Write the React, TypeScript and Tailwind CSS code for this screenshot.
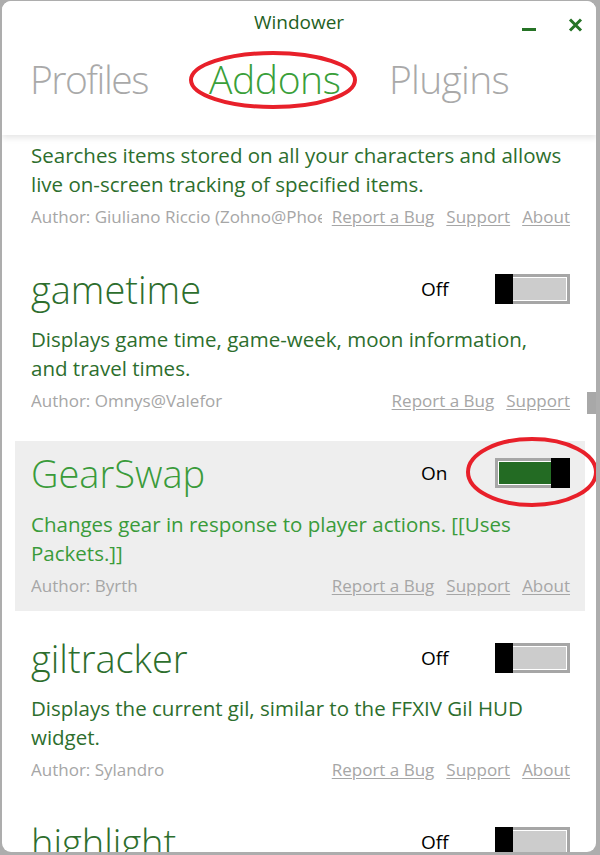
import React from 'react'

interface Addon {
  name: string
  desc: string[]
  author: string
  enabled: boolean
  about: boolean
}

const addons: Addon[] = [
  {
    name: 'findAll',
    desc: ['Searches items stored on all your characters and allows', 'live on-screen tracking of specified items.'],
    author: 'Author: Giuliano Riccio (Zohno@Phoenix)',
    enabled: false,
    about: true,
  },
  {
    name: 'gametime',
    desc: ['Displays game time, game-week, moon information,', 'and travel times.'],
    author: 'Author: Omnys@Valefor',
    enabled: false,
    about: false,
  },
  {
    name: 'GearSwap',
    desc: ['Changes gear in response to player actions. [[Uses', 'Packets.]]'],
    author: 'Author: Byrth',
    enabled: true,
    about: true,
  },
  {
    name: 'giltracker',
    desc: ['Displays the current gil, similar to the FFXIV Gil HUD', 'widget.'],
    author: 'Author: Sylandro',
    enabled: false,
    about: true,
  },
  {
    name: 'highlight',
    desc: ['Highlights party members in chat.', ''],
    author: 'Author: Balloon',
    enabled: false,
    about: true,
  },
]

const font = "[font-family:'Open_Sans','Noto_Sans',sans-serif]"

// Square switch: grey frame, black knob
const Toggle = ({ on }: { on: boolean }) => (
  <div className="relative h-[30px] w-[75px] bg-[#a6a6a6] p-[3px]">
    <div className={`h-full w-full border border-white ${on ? 'bg-[#236b23]' : 'bg-[#cccccc]'}`} />
    <div className={`absolute top-0 h-[30px] bg-black ${on ? 'right-0 w-[19px]' : 'left-0 w-[18px]'}`} />
  </div>
)

const AddonRow = ({ addon }: { addon: Addon }) => {
  const on = addon.enabled
  return (
    <div className={`h-[170px] pl-[16px] pr-[15px] ${on ? 'bg-[#eeeeee]' : 'bg-white'}`}>
      {/* Title + switch */}
      <div className="mt-[10px] flex h-[44px] items-center">
        <span className={`text-[38px] font-light leading-[44px] ${on ? 'text-[#3a9b3a]' : 'text-[#2d6e2d]'}`}>
          {addon.name}
        </span>
        <span className="ml-auto w-[74px] text-[19px] leading-[24px] text-black">{on ? 'On' : 'Off'}</span>
        <Toggle on={on} />
      </div>

      {/* Description */}
      <div className={`mt-[14.5px] text-[20.5px] leading-[29px] ${on ? 'text-[#3a9b3a]' : 'text-[#2d6e2d]'}`}>
        {addon.desc.map((line, i) => (
          <div key={i} className="h-[29px] whitespace-nowrap">
            {line}
          </div>
        ))}
      </div>

      {/* Author + links */}
      <div className="mt-[6px] flex h-[23px] items-center text-[17px] leading-[23px] text-[#a6a6a6]">
        <span className="flex-1 overflow-hidden whitespace-nowrap">{addon.author}</span>
        <span className="ml-[10px] whitespace-nowrap underline underline-offset-2">Report a Bug</span>
        <span className="ml-[12px] whitespace-nowrap underline underline-offset-2">Support</span>
        {addon.about && <span className="ml-[12px] whitespace-nowrap underline underline-offset-2">About</span>}
      </div>
    </div>
  )
}

export default function App() {
  return (
    <div className={`h-[855px] w-[600px] bg-[#adadad] pb-[3px] pl-[2px] pr-[4px] pt-[1px] ${font}`}>
      <div className="relative flex h-full flex-col overflow-hidden rounded-[9px] bg-white">
        {/* Header */}
        <div className="relative z-10 h-[134px] shrink-0 bg-white shadow-[0_3px_6px_rgba(0,0,0,0.10)]">
          <div className="flex h-[42px] items-center justify-center pt-[1px] text-[19px] text-[#1f5f1f]">Windower</div>
          <div className="absolute right-[60px] top-[27px] h-[3px] w-[14px] bg-[#267326]" />
          <svg className="absolute right-[13px] top-[17px]" width="15" height="14" viewBox="0 0 15 14">
            <path d="M2 1.5 L13 12.5 M13 1.5 L2 12.5" stroke="#267326" strokeWidth="3" />
          </svg>

          <div className="mt-[12px] flex pl-[28px] text-[39px] font-light leading-[48px]">
            <div className="w-[179px] tracking-[-1.5px] text-[#a9a9a9]">Profiles</div>
            <div className="w-[180px] tracking-[-0.4px] text-[#3a9f3a]">Addons</div>
            <div className="tracking-[-0.7px] text-[#a9a9a9]">Plugins</div>
          </div>
        </div>

        {/* Scrolled list */}
        <div className="relative flex-1 overflow-hidden">
          <div className="-mt-[63px] flex flex-col gap-[14.5px] pl-[13px] pr-[11px]">
            {addons.map((a) => (
              <AddonRow key={a.name} addon={a} />
            ))}
          </div>
          <div className="absolute right-0 top-[257px] h-[22px] w-[9px] bg-[#a8a8a8]" />
        </div>

        {/* Red annotation ellipses */}
        <svg className="pointer-events-none absolute left-0 top-0 z-20" width="594" height="851">
          <ellipse cx="271" cy="79" rx="82" ry="27" fill="none" stroke="#e8202a" strokeWidth="4" />
          <ellipse cx="530" cy="471" rx="64" ry="33" fill="none" stroke="#e8202a" strokeWidth="4" />
        </svg>
      </div>
    </div>
  )
}
